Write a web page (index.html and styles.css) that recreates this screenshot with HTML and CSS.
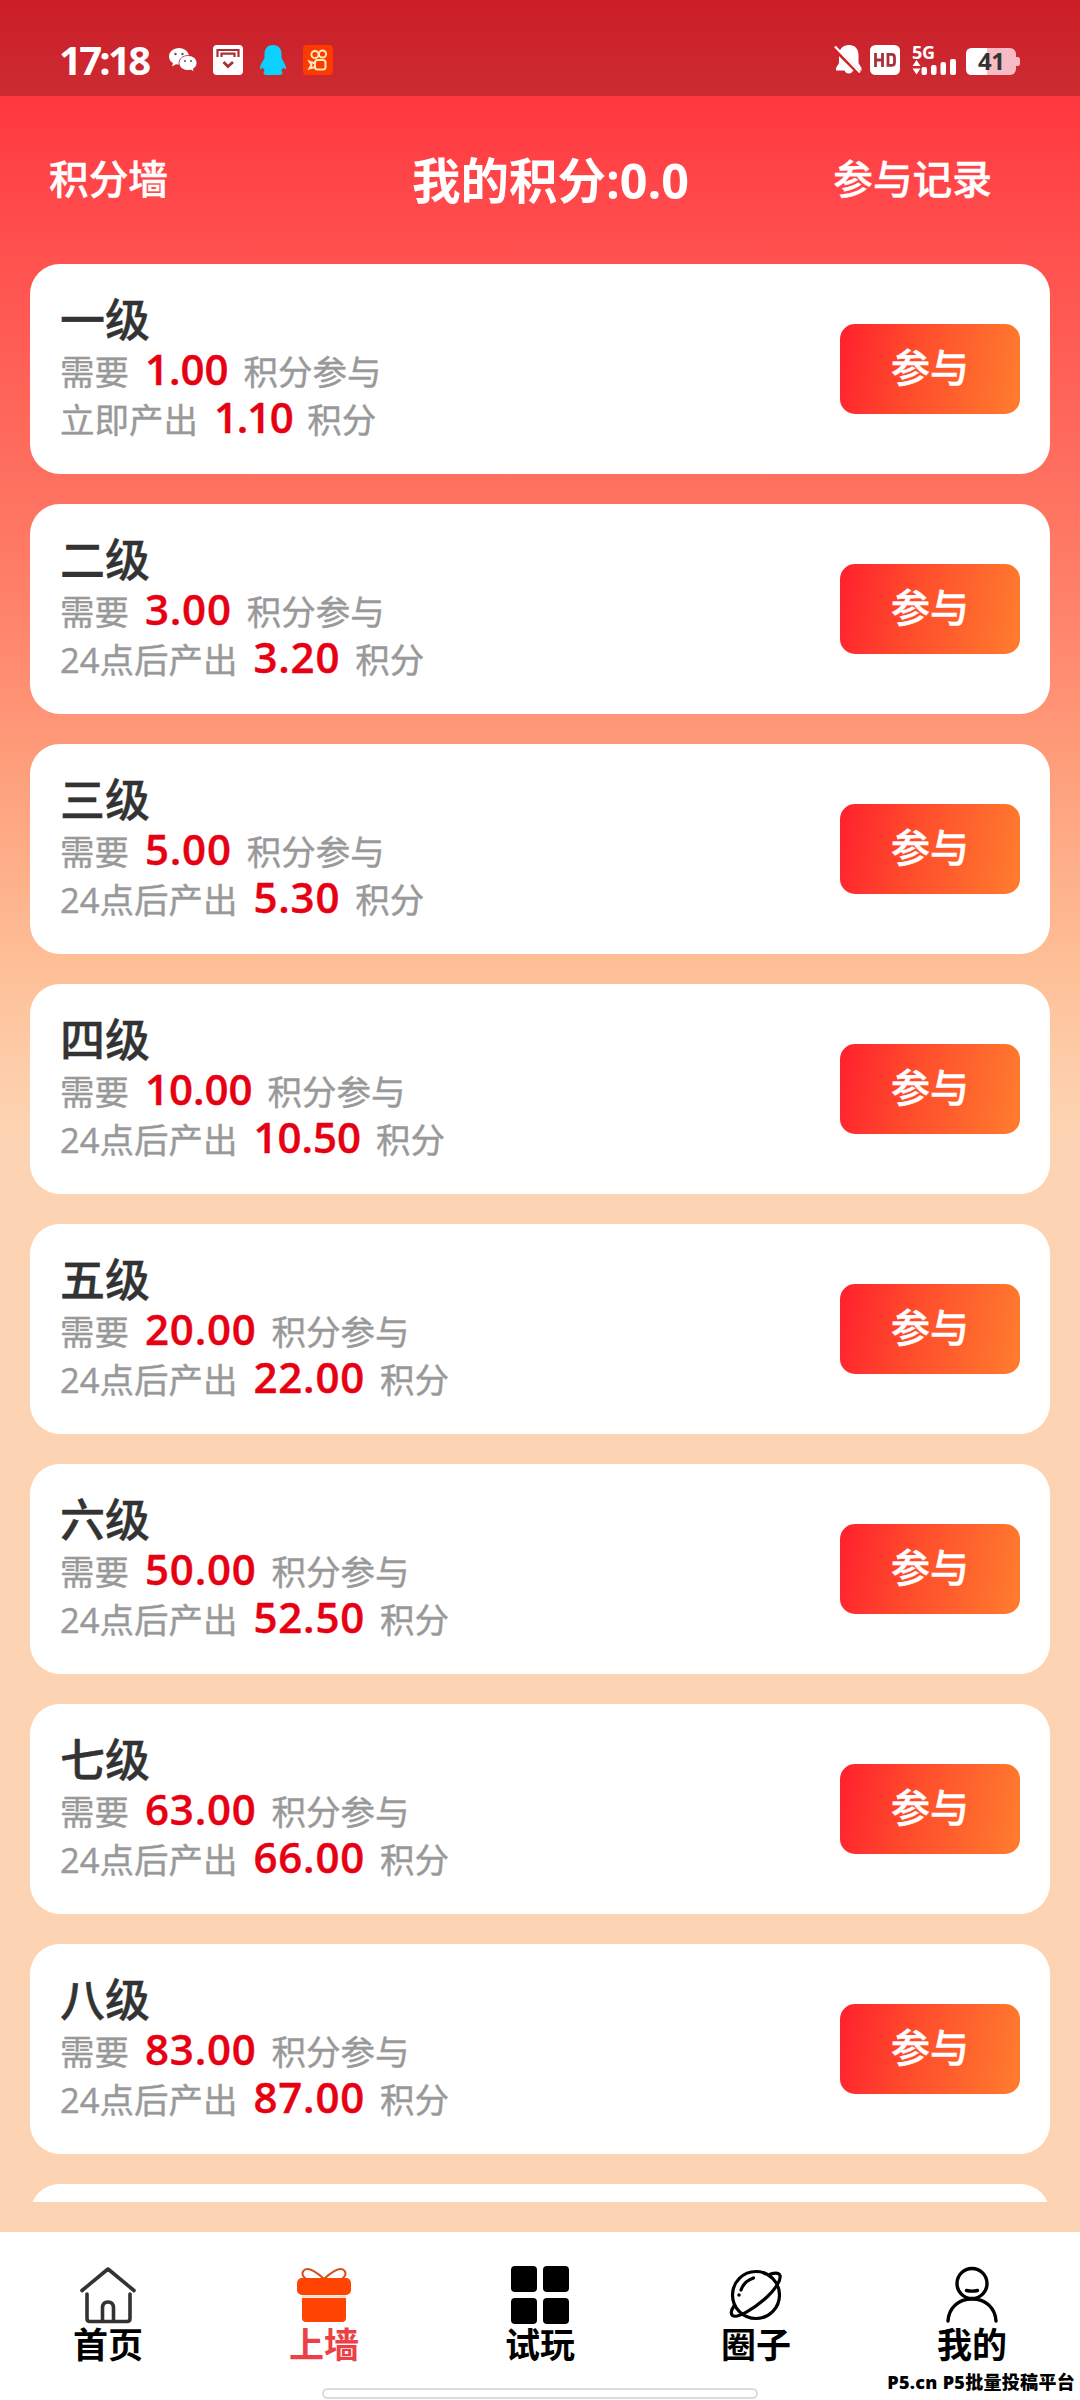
FILE: index.html
```html
<!DOCTYPE html>
<html lang="zh-CN">
<head>
<meta charset="utf-8">
<title>积分墙</title>
<link rel="stylesheet" href="styles.css">
</head>
<body>
<div class="app">
  <div class="status">
    <div class="status-left">
      <span class="time">17:18</span>
      <svg class="ic-wechat" width="28" height="26" viewBox="0 0 28 26"><path fill="#fff" d="M10 1C4.500 1 0 4.600 0 9.400c0 3 1.700 5.200 4 6.600L3 19.500l4-2.200c1 .3 2 .3 3 .3 5.500 0 10-3.600 10-8.200S15.500 1 10 1z"/><path fill="#fff" stroke="#b3212c" stroke-width=".8" d="M19 8.500c-5 0-9 3.200-9 7.500s4 7.500 9 7.500c1 0 1.800-.1 2.700-.4l3.500 1.900-.8-3.200c2.200-1.300 3.600-3.400 3.600-5.800 0-4.300-4-7.500-9-7.500z"/><g fill="#555"><circle cx="6.500" cy="7" r="1.200"/><circle cx="13.500" cy="7" r="1.200"/><circle cx="16" cy="14" r="1"/><circle cx="22" cy="14" r="1"/></g></svg>
      <svg class="ic-box" width="30" height="30" viewBox="0 0 30 30"><rect width="30" height="30" rx="4" fill="#fff"/><path d="M4.500 12V5h21v7M8.500 12V8.700h13V12" fill="none" stroke="#a8323a" stroke-width="2.200"/><path d="M10.500 17l4.500 4.500 5-4.500" fill="none" stroke="#a8323a" stroke-width="2.800"/></svg>
      <svg class="ic-qq" width="28" height="30" viewBox="0 0 28 30"><path fill="#0cd0ff" d="M14 0C8 0 5.500 4 5.500 9v4C4 16 1 20 1 23.500c0 1.500 1.500.5 3-1 .5 1.500 1 2 1.800 3-2 1-1.500 4.500 1 4.500h14.400c2.500 0 3-3.500 1-4.500.8-1 1.300-1.500 1.800-3 1.500 1.500 3 2.500 3 1 0-3.500-3-7.500-4.500-10.500V9c0-5-2.500-9-8.500-9z"/></svg>
      <svg class="ic-ks" width="30" height="30" viewBox="0 0 30 30"><rect width="30" height="30" rx="4" fill="#ff3a00"/><g fill="none" stroke="#ffe9b8" stroke-width="2"><circle cx="12" cy="9.500" r="3.600"/><circle cx="19.500" cy="9" r="3.600"/><rect x="12" y="15" width="10.500" height="9.500" rx="2.500"/><path d="M12 18.500L6.500 16.500 8.500 20l-2 3.500 5.500-1.500"/></g></svg>
    </div>
    <div class="status-right">
      <svg width="28" height="30" viewBox="0 0 28 30"><path fill="#fff" d="M15 0c6 0 9.500 4 9.500 10v8l3 5v2.500H19a4.500 4.500 0 0 1-8.500 0H2V23l3-5v-8C5 4 9 0 15 0z"/><path d="M0 3l26 26" stroke="#cf202c" stroke-width="4.500"/><path d="M1 1.500l25 26" stroke="#fff" stroke-width="2.200"/></svg>
      <svg class="ic-hd" width="30" height="30" viewBox="0 0 30 30"><rect width="30" height="30" rx="5.500" fill="#fff"/><g fill="none" stroke="#a8323a" stroke-width="2.800"><path d="M5.500 8v14M12.500 8v14M5.500 15h7M18 9.400h3.500q3 0 3 3v5q0 3-3 3H18z"/></g></svg>
      <svg class="ic-net" width="45" height="30" viewBox="0 0 45 30"><text class="net-text" x="0" y="13.500" textLength="23">5G</text><path fill="#fff" d="M4.500 15l4 6h-8zM.5 23.500h8l-4 6z"/><g fill="#fff"><rect x="9.500" y="22" width="5.500" height="8" rx="2"/><rect x="19" y="20" width="5.500" height="10" rx="2"/><rect x="28.500" y="17" width="5.500" height="13" rx="2"/><rect x="38" y="14" width="6" height="16" rx="2"/></g></svg>
      <svg class="ic-bat" width="54" height="27" viewBox="0 0 54 27"><rect width="50" height="27" rx="6" fill="#f7bcc3"/><path d="M50 9h1.500q2.500 0 2.500 2.500v4q0 2.500-2.500 2.500H50z" fill="#f7bcc3"/><path d="M6 0h15v27H6q-6 0-6-6V6q0-6 6-6z" fill="#fff"/><text class="bat-text" x="12" y="22" textLength="27">41</text></svg>
    </div>
  </div>
  <header class="header">
    <span class="head-link">积分墙</span>
    <span class="head-title">我的积分:0.0</span>
    <span class="head-link head-end">参与记录</span>
  </header>
  <main class="list">
    <section class="card"><div class="info"><h2>一级</h2><p>需要<b class="one">1.00</b>积分参与</p><p>立即产出<b class="two">1.10</b>积分</p></div><button class="join">参与</button></section>
    <section class="card"><div class="info"><h2>二级</h2><p>需要<b>3.00</b>积分参与</p><p>24点后产出<b>3.20</b>积分</p></div><button class="join">参与</button></section>
    <section class="card"><div class="info"><h2>三级</h2><p>需要<b>5.00</b>积分参与</p><p>24点后产出<b>5.30</b>积分</p></div><button class="join">参与</button></section>
    <section class="card"><div class="info"><h2>四级</h2><p>需要<b class="one">10.00</b>积分参与</p><p>24点后产出<b class="one">10.50</b>积分</p></div><button class="join">参与</button></section>
    <section class="card"><div class="info"><h2>五级</h2><p>需要<b>20.00</b>积分参与</p><p>24点后产出<b>22.00</b>积分</p></div><button class="join">参与</button></section>
    <section class="card"><div class="info"><h2>六级</h2><p>需要<b>50.00</b>积分参与</p><p>24点后产出<b>52.50</b>积分</p></div><button class="join">参与</button></section>
    <section class="card"><div class="info"><h2>七级</h2><p>需要<b>63.00</b>积分参与</p><p>24点后产出<b>66.00</b>积分</p></div><button class="join">参与</button></section>
    <section class="card"><div class="info"><h2>八级</h2><p>需要<b>83.00</b>积分参与</p><p>24点后产出<b>87.00</b>积分</p></div><button class="join">参与</button></section>
    <section class="card"></section>
  </main>
  <nav class="tabs">
    <a class="tab"><svg width="60" height="60" viewBox="0 0 60 60" fill="none" stroke="#333" stroke-width="3.600" stroke-linecap="round" stroke-linejoin="round"><path d="M4 25.500L30 4l26 21.500M9 29v24.500q0 3 3 3h37q3 0 3-3V29M24.500 56V43q0-6 5.500-6t5.500 6v13"/></svg><span>首页</span></a>
    <a class="tab active"><svg width="60" height="60" viewBox="0 0 60 60"><path d="M30 14C24 8 15 2 11 4.500S8 11 12 14M30 14C36 8 45 2 49 4.500S52 11 48 14" fill="none" stroke="#d5501e" stroke-width="2"/><rect x="3" y="13" width="54" height="17" rx="5" fill="#ff4300"/><path d="M8 33h44v20q0 4-4 4H12q-4 0-4-4z" fill="#ff4300"/><path d="M8 31.500h44" stroke="#f5d5c9" stroke-width="2"/></svg><span>上墙</span></a>
    <a class="tab"><svg width="60" height="60" viewBox="0 0 60 60"><rect x="1" y="1" width="26" height="26" rx="4"/><rect x="33" y="1" width="26" height="26" rx="4"/><rect x="1" y="33" width="26" height="26" rx="4"/><rect x="33" y="33" width="26" height="26" rx="4"/></svg><span>试玩</span></a>
    <a class="tab"><svg width="60" height="60" viewBox="0 0 60 60" fill="none" stroke="#000" stroke-width="3.200" stroke-linecap="round"><circle cx="30" cy="30" r="23.500"/><path d="M44.500 9c5-1.500 8.500-1.500 9.500 1.500 1 4-3.500 12.500-12.500 21C29 43 11.500 54 6.500 50.500 4.500 48.500 5.500 44.500 8 41"/><path d="M15 25c2-6 6.500-10 12.500-12"/><circle cx="13" cy="30" r="1" fill="#000" stroke-width="1.500"/></svg><span>圈子</span></a>
    <a class="tab"><svg width="60" height="60" viewBox="0 0 60 60" fill="none" stroke="#000" stroke-width="3.400" stroke-linecap="round"><circle cx="30" cy="18.500" r="15"/><path d="M24.500 25.500q5.500 1.200 11 0M6 56C7 42 17 34 30 34S53 42 54 56"/></svg><span>我的</span></a>
    <div class="gesture"></div>
    <div class="mark">P5.cn P5批量投稿平台</div>
  </nav>
</div>
</body>
</html>
```
FILE: styles.css
```css
* { box-sizing: border-box; }
body { margin: 0; font-family: "Open Sans", "Noto Sans CJK SC", sans-serif; }
.app {
  width: 1080px; height: 2400px; overflow: hidden;
  display: flex; flex-direction: column;
  background: linear-gradient(#ff2534 0, #ff3840 100px, #ff504e 250px, #fe705f 480px, #ff836b 613px, #fe9e7b 766px, #fec098 970px, #fdd4b3 1130px);
}
.status {
  height: 96px; flex: none; background: rgba(0, 0, 0, .2);
  padding: 45px 60px 0 59px;
  display: flex; justify-content: space-between;
}
.status-left, .status-right { display: flex; height: 30px; align-items: center; }
.status-right { align-items: flex-end; }
.status svg { overflow: visible; }
.time { width: 92px; font-size: 40px; font-weight: 700; line-height: 30px; letter-spacing: -2.700px; color: #fff; white-space: nowrap; }
.ic-wechat { margin-left: 18px; }
.ic-box { margin-left: 16px; }
.ic-qq { margin-left: 16px; }
.ic-ks { margin-left: 16px; }
.ic-hd { margin-left: 8px; }
.ic-net { margin-left: 12px; }
.ic-bat { margin-left: 9px; }
.net-text { font: 700 18px "Open Sans", sans-serif; fill: #fff; }
.bat-text { font: 700 24px "Open Sans", sans-serif; fill: #333; }
.header {
  height: 168px; flex: none; padding: 0 88px 0 49px; color: #fff;
  display: grid; grid-template-columns: 240px 1fr 240px; align-items: center;
}
.head-link { font-family: "Noto Sans CJK SC", sans-serif; font-size: 39.700px; font-weight: 500; line-height: 60px; padding-bottom: 6px; -webkit-text-stroke: .4px #fff; }
.head-end { text-align: right; }
.head-title { text-align: center; font-size: 48.500px; font-weight: 700; line-height: 60px; white-space: nowrap; padding-left: 60px; }
.list {
  height: 1938px; flex: none; overflow: hidden; padding: 0 30px;
  display: flex; flex-direction: column; gap: 30px;
}
.card {
  height: 210px; flex: none; border-radius: 30px; background: #fff;
  padding: 29px 30px; display: flex; justify-content: space-between; align-items: center;
}
.info { align-self: flex-start; }
h2 { margin: 0 0 2px; font-family: "Noto Sans CJK SC", sans-serif; font-size: 45px; font-weight: 500; line-height: 50px; color: #333; -webkit-text-stroke: .4px #333; }
p { margin: 0; height: 48px; display: flex; align-items: baseline; font-size: 34.500px; line-height: 48px; color: #999; white-space: nowrap; -webkit-text-stroke: .4px #999; }
b { margin: 0 15px 0 16px; font-size: 42px; font-weight: 600; letter-spacing: .8px; color: #e60012; -webkit-text-stroke: .4px #e60012; }
b.one { letter-spacing: 0; }
b.two { letter-spacing: -1.300px; }
.join {
  width: 180px; height: 90px; border: 0; border-radius: 15px; padding: 0 0 9px;
  background: linear-gradient(100deg, #ff202e, #ff4b2c 40%, #ff7d2e);
  font-family: "Noto Sans CJK SC", sans-serif; font-size: 39px; font-weight: 500; color: #fff; -webkit-text-stroke: .5px #fff;
}
.tabs {
  position: relative; height: 168px; flex: none; margin-top: 30px; background: #fff;
  display: grid; grid-template-columns: repeat(5, 1fr); padding-top: 33px;
}
.tab { display: flex; flex-direction: column; align-items: center; color: #000; }
.tab span { font-family: "Noto Sans CJK SC", sans-serif; font-size: 35px; font-weight: 700; line-height: 40px; margin-top: -2px; }
.active { color: #ec3f46; }
.gesture { position: absolute; left: 322px; bottom: 1px; width: 436px; height: 11px; border: 2px solid #dcdcdc; border-radius: 6px; background: #fff; }
.mark { position: absolute; right: 5px; bottom: 5px; font-size: 18px; line-height: 26px; font-weight: 800; letter-spacing: .3px; white-space: nowrap; }
```
